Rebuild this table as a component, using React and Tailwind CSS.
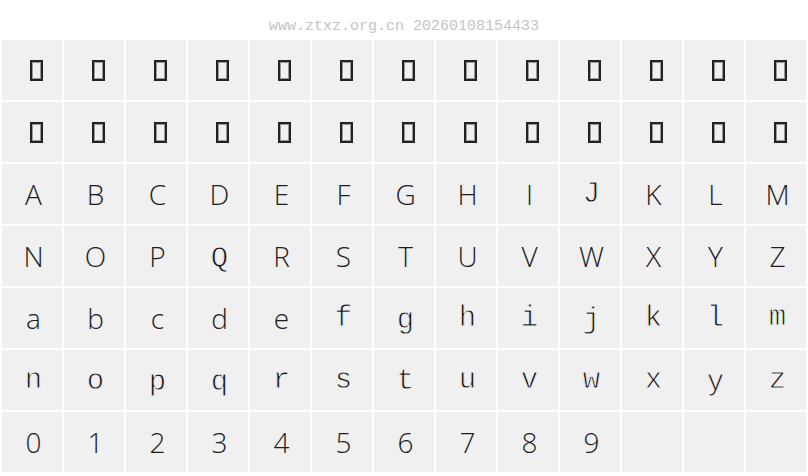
import React from "react";

const upper = "ABCDEFGHIJKLMNOPQRSTUVWXYZ".split("");
const lower = "abcdefghijklmnopqrstuvwxyz".split("");
const digits = "0123456789".split("");

// glyphs that come from the mono fallback in the specimen
const monoSet = new Set("fghijklmnopqrstuvwxyzJQ".split(""));

// small per-glyph vertical nudges seen in the specimen
const nudge = {
  Q: "translate-y-[3px]",
  g: "translate-y-[2px]",
  j: "translate-y-[2px]",
  o: "translate-y-[1px]",
  p: "translate-y-[2px]",
  q: "translate-y-[2px]",
  t: "translate-y-[1px]",
  y: "translate-y-[2px]",
  m: "-translate-y-[1px]",
};

const Tofu = () => (
  <div className="ml-[5px] w-[13px] h-[21px] border-2 border-[#222] shadow-[inset_0_0_0_1px_#9a9a9a]" />
);

const Cell = ({ ch }) => {
  if (ch === null) return <div className="h-[60px] bg-[#f0f0f0]" />;
  const mono = monoSet.has(ch);
  return (
    <div className="h-[60px] bg-[#f0f0f0] flex items-center justify-center pl-[3px]">
      {ch === "tofu" ? (
        <Tofu />
      ) : (
        <span
          className={
            (mono
              ? "font-['Liberation_Mono',monospace] text-[29px] font-normal text-[#111] [-webkit-text-stroke:0.8px_#f0f0f0] "
              : "font-['Open_Sans',sans-serif] text-[28px] font-light text-[#1e1e1e] ") +
            "leading-none " +
            (nudge[ch] || "")
          }
        >
          {ch}
        </span>
      )}
    </div>
  );
};

export default function App() {
  const cells = [
    ...Array(26).fill("tofu"),
    ...upper,
    ...lower,
    ...digits,
    null,
    null,
    null,
  ];

  return (
    <div className="w-[808px] h-[476px] bg-white overflow-hidden">
      <div className="h-[40px] flex items-start justify-center pt-[19px]">
        <span className="font-['Liberation_Mono',monospace] text-[15px] leading-none text-[#c4c4c4]">
          www.ztxz.org.cn 20260108154433
        </span>
      </div>
      <div className="grid grid-cols-[repeat(13,60px)] gap-[2px] px-[2px]">
        {cells.map((ch, i) => (
          <Cell key={i} ch={ch} />
        ))}
      </div>
    </div>
  );
}
